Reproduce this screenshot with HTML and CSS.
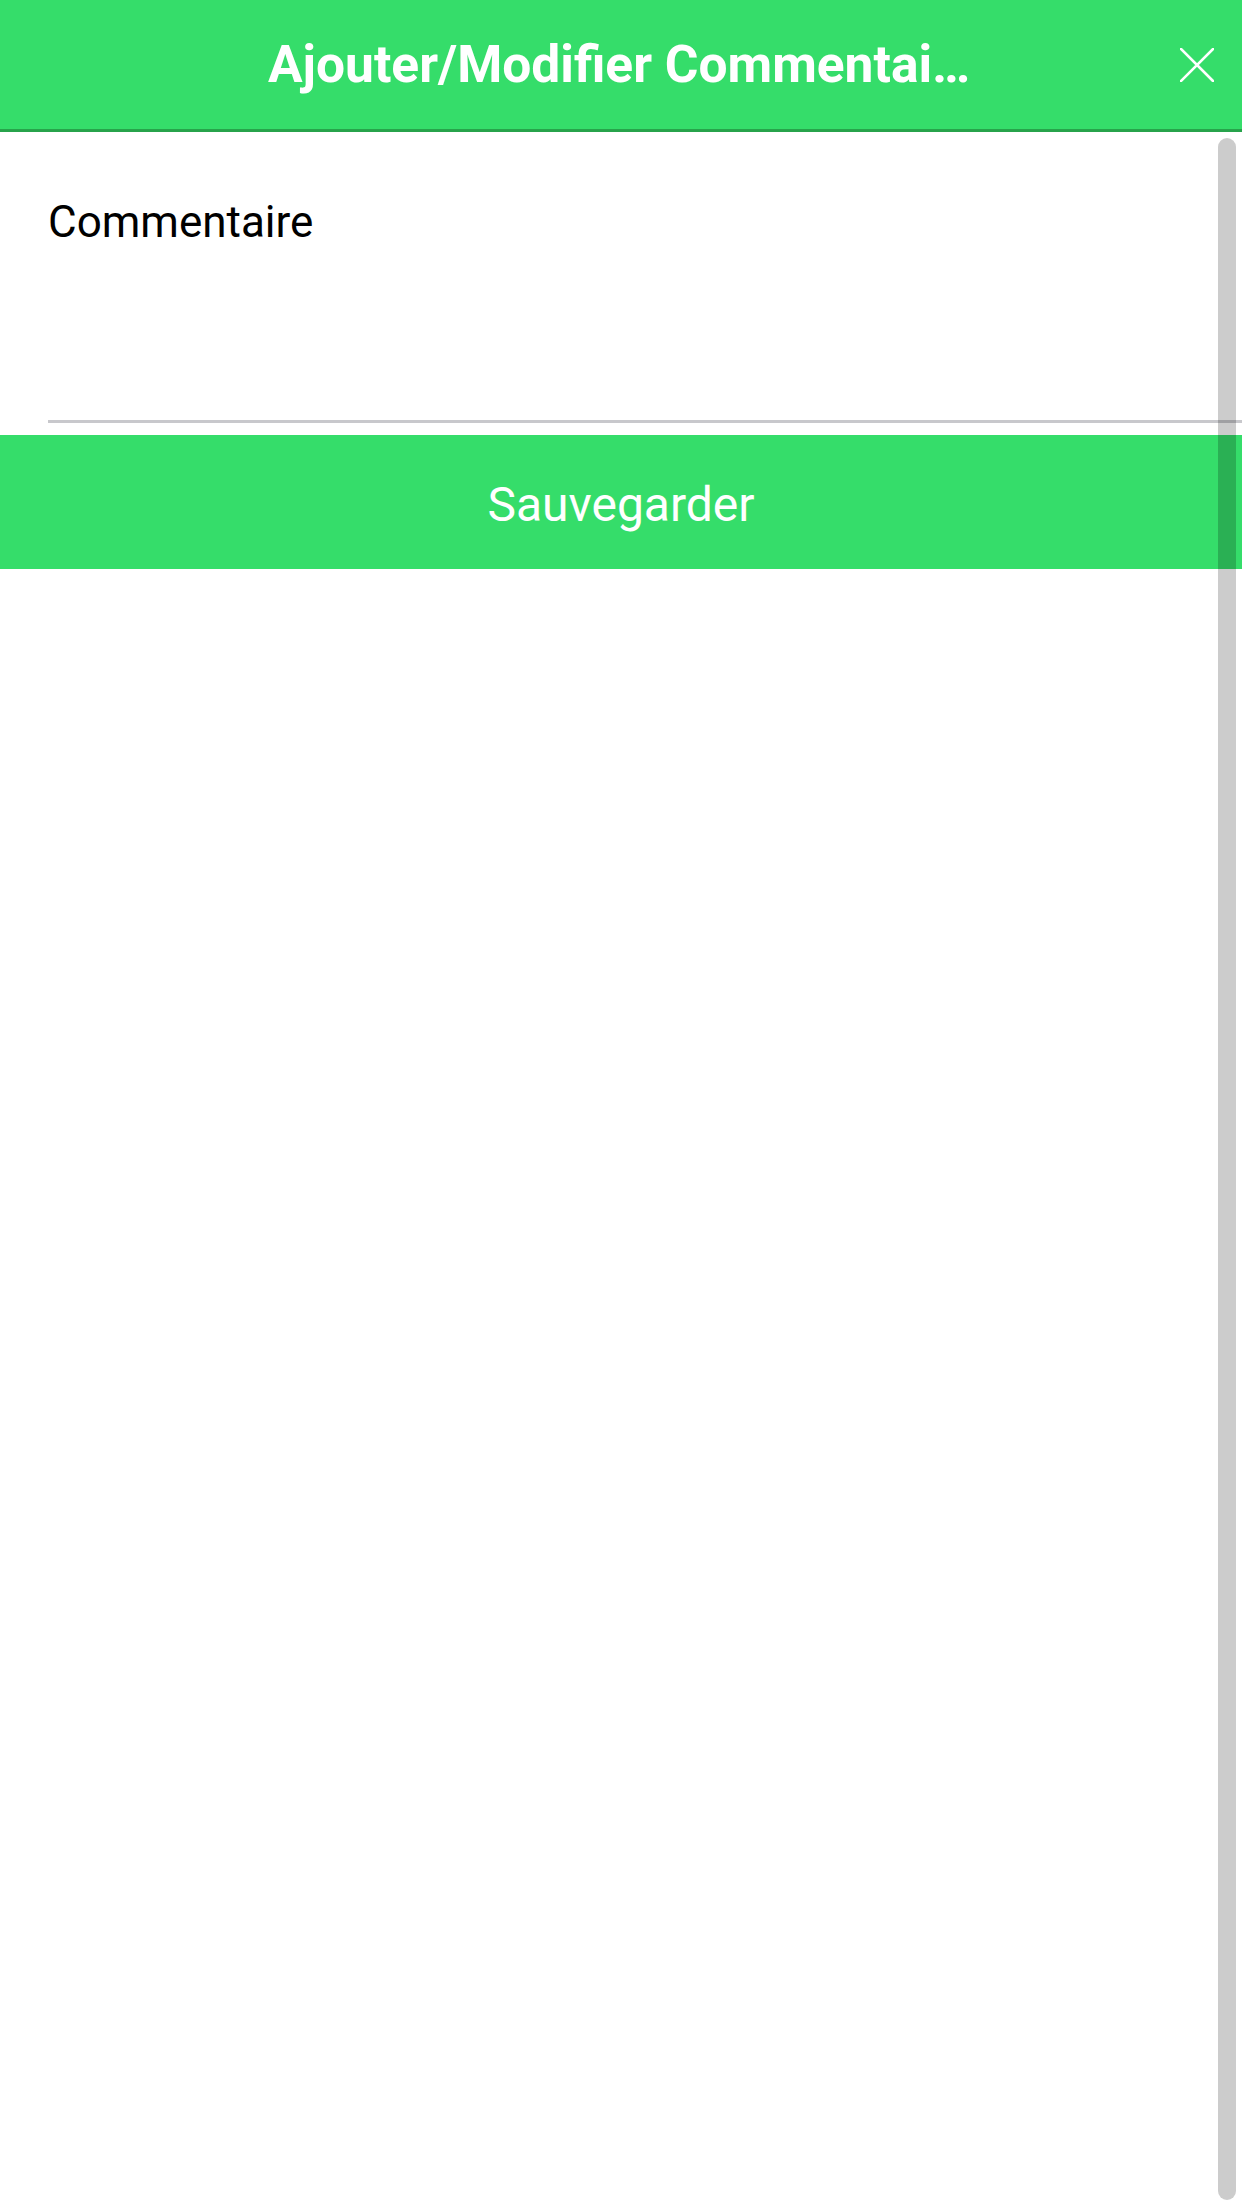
FILE: index.html
```html
<!DOCTYPE html>
<html lang="fr">
<head>
<meta charset="utf-8">
<title>Ajouter/Modifier Commentaire</title>
<link rel="stylesheet" href="styles.css">
</head>
<body>
<div class="screen">
  <header class="topbar">
    <h1 class="title">Ajouter/Modifier Commentaire</h1>
    <button class="close" aria-label="Fermer">
      <svg viewBox="0 0 34 34" width="34" height="34">
        <path d="M1 1 L33 33 M33 1 L1 33" stroke="#fff" stroke-width="2.6" stroke-linecap="square" fill="none"/>
      </svg>
    </button>
  </header>
  <main class="content">
    <div class="field">
      <label class="field-label">Commentaire</label>
    </div>
    <button class="save">Sauvegarder</button>
  </main>
  <div class="scrollbar"></div>
</div>
</body>
</html>
```
FILE: styles.css
```css
html, body {
  margin: 0;
  padding: 0;
  background: #ffffff;
}

.screen {
  position: relative;
  width: 1242px;
  height: 2208px;
  overflow: hidden;
  font-family: Roboto, "Noto Sans", sans-serif;
  background: #ffffff;
}

.topbar {
  height: 129px;
  background: #35dd6a;
  border-bottom: 3px solid #27a34b;
  display: grid;
  grid-template-columns: 1fr 706px 1fr;
  align-items: center;
}

.title {
  grid-column: 2;
  margin: 0;
  color: #ffffff;
  font-size: 51.5px;
  font-weight: 700;
  text-align: center;
  white-space: nowrap;
  overflow: hidden;
  text-overflow: ellipsis;
}

.close {
  grid-column: 3;
  justify-self: end;
  margin-right: 28px;
  width: 34px;
  height: 34px;
  padding: 0;
  border: 0;
  background: none;
  display: flex;
}

.content {
  display: flex;
  flex-direction: column;
  padding-top: 64px;
}

.field {
  margin-left: 48px;
  padding-bottom: 172px;
  border-bottom: 3px solid #c8c8cc;
}

.field-label {
  display: block;
  font-size: 44px;
  line-height: 52px;
  color: #000000;
}

.save {
  margin-top: 12px;
  height: 134px;
  padding: 6px 0 0;
  border: 0;
  background: #35dd6a;
  color: #ffffff;
  font-family: Roboto, "Noto Sans", sans-serif;
  font-size: 48px;
  line-height: 128px;
  font-weight: 400;
  text-align: center;
  display: block;
  width: 100%;
}

.scrollbar {
  position: absolute;
  top: 138px;
  right: 6px;
  width: 18px;
  height: 2062px;
  border-radius: 9px;
  background: rgba(0, 0, 0, 0.2);
}
```
